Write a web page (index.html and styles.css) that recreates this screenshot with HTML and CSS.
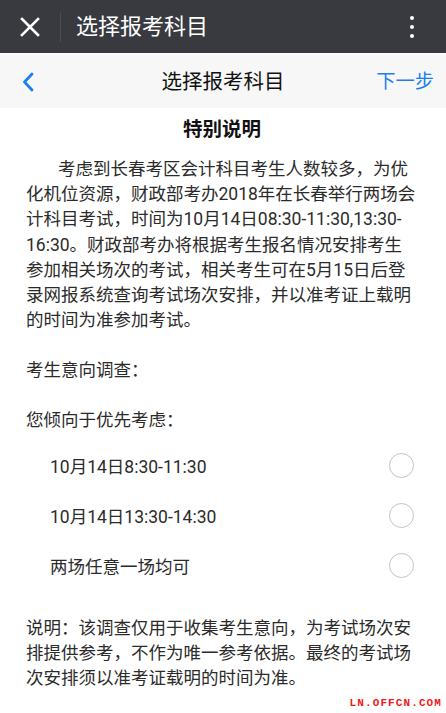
FILE: index.html
```html
<!DOCTYPE html>
<html lang="zh-CN">
<head>
<meta charset="utf-8">
<title>选择报考科目</title>
<link rel="stylesheet" href="styles.css">
</head>
<body>
<header class="topbar">
  <span class="close">
    <svg width="20" height="20" viewBox="0 0 20 20"><path d="M2 2 L18 18 M18 2 L2 18" stroke="#fff" stroke-width="2.6" stroke-linecap="square"/></svg>
  </span>
  <span class="divider"></span>
  <span class="top-title">选择报考科目</span>
  <span class="kebab"><i></i><i></i><i></i></span>
</header>
<nav class="navbar">
  <span class="back">
    <svg width="12" height="20" viewBox="0 0 12 20"><path d="M10 2 L2.5 10 L10 18" fill="none" stroke="#1a7ff0" stroke-width="2.8" stroke-linecap="round" stroke-linejoin="round"/></svg>
  </span>
  <span class="nav-title">选择报考科目</span>
  <span class="next">下一步</span>
</nav>
<main class="content">
  <h1 class="heading">特别说明</h1>
  <p class="intro">考虑到长春考区会计科目考生人数较多，为优化机位资源，财政部考办2018年在长春举行两场会计科目考试，时间为10月14日08:30-11:30,13:30-<wbr>16:30。财政部考办将根据考生报名情况安排考生参加相关场次的考试，相关考生可在5月15日后登录网报系统查询考试场次安排，并以准考证上载明的时间为准参加考试。</p>
  <p class="label survey">考生意向调查：</p>
  <p class="label prefer">您倾向于优先考虑：</p>
  <ul class="options">
    <li class="option"><span>10月14日8:30-11:30</span><span class="radio"></span></li>
    <li class="option"><span>10月14日13:30-14:30</span><span class="radio"></span></li>
    <li class="option"><span>两场任意一场均可</span><span class="radio"></span></li>
  </ul>
  <p class="note">说明：该调查仅用于收集考生意向，为考试场次安排提供参考，不作为唯一参考依据。最终的考试场次安排须以准考证载明的时间为准。</p>
</main>
<div class="watermark">LN.OFFCN.COM</div>
</body>
</html>
```
FILE: styles.css
```css
* { box-sizing: border-box; }
html, body { margin: 0; padding: 0; }
body {
  width: 446px;
  height: 713px;
  overflow: hidden;
  position: relative;
  background: #fff;
  font-family: Roboto, "Noto Sans CJK SC", sans-serif;
  color: #2b2b2b;
}
.topbar {
  height: 53px;
  background: #393a3f;
  display: flex;
  align-items: center;
  color: #fff;
}
.close {
  display: flex;
  margin-left: 20px;
}
.divider {
  width: 1px;
  height: 30px;
  background: #4c4d52;
  margin-left: 20px;
}
.top-title {
  margin-left: 15px;
  font-size: 22px;
  line-height: 30px;
  flex: 1;
}
.kebab {
  display: flex;
  flex-direction: column;
  gap: 5px;
  margin-right: 32px;
}
.kebab i {
  width: 4px;
  height: 4px;
  border-radius: 50%;
  background: #fff;
  display: block;
}
.navbar {
  height: 55px;
  border-top: 2px solid #fafafa;
  background: #f7f7f7;
  display: grid;
  grid-template-columns: 1fr auto 1fr;
  align-items: center;
  padding: 0 12px;
}
.back { display: flex; margin-left: 10px; }
.nav-title {
  font-size: 20.5px;
  color: #111;
  line-height: 28px;
}
.next {
  font-size: 19.3px;
  color: #1a7ff0;
  text-align: right;
  line-height: 28px;
}
.content {
  padding: 0 28px 0 26px;
}
.heading {
  margin: 7px 0 0;
  font-size: 19.5px;
  line-height: 30px;
  text-align: center;
  font-weight: bold;
  color: #111;
}
.intro {
  margin: 12px 0 0;
  font-size: 17.5px;
  line-height: 25.2px;
  text-indent: 32px;
}
.label {
  margin: 0;
  font-size: 17.5px;
  line-height: 25px;
}
.survey { margin-top: 25px; }
.prefer { margin-top: 25px; }
.options {
  list-style: none;
  margin: 7px 0 0;
  padding: 0 4px 0 24px;
}
.option {
  height: 50px;
  display: flex;
  align-items: center;
  justify-content: space-between;
  font-size: 17.5px;
}
.radio {
  width: 25px;
  height: 25px;
  border: 1.6px solid #c4c4c4;
  border-radius: 50%;
}
.note {
  margin: 26px 0 0;
  font-size: 17.5px;
  line-height: 25px;
}
.watermark {
  position: absolute;
  right: 4px;
  bottom: 4px;
  font-family: "Liberation Mono", monospace;
  font-weight: bold;
  font-size: 11px;
  letter-spacing: 1.1px;
  color: #f01818;
  line-height: 12px;
}
```
